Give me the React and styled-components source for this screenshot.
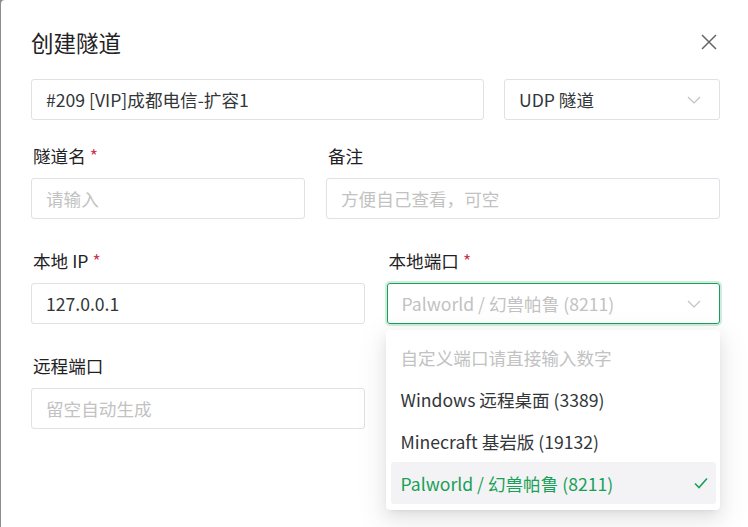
import styled, { createGlobalStyle } from "styled-components";

const GlobalStyle = createGlobalStyle`
    html, body {
        margin: 0;
        height: 100%;
    }
    body {
        background: #8c8c8c;
        font-family: "Noto Sans CJK SC", "Noto Sans", sans-serif;
        color: #333639;
    }
`;

const Modal = styled.div`
    margin-left: 1px;
    min-height: 527px;
    box-sizing: border-box;
    background: #fff;
    border-top-left-radius: 4px;
    padding: 20px 28px 0 30px;
`;

const Header = styled.div`
    display: flex;
    align-items: center;
    justify-content: space-between;
    height: 44px;
`;

const Title = styled.div`
    font-size: 22.5px;
    color: #1f2225;
`;

const CloseButton = styled.button`
    border: none;
    background: none;
    padding: 0;
    width: 20px;
    height: 20px;
    margin-right: 1px;
    display: flex;
    align-items: center;
    justify-content: center;
    color: #666;
    cursor: pointer;
`;

const Row = styled.div`
    display: grid;
    grid-template-columns: ${p => p.$cols};
    column-gap: ${p => p.$gap}px;
    margin-top: ${p => p.$top}px;
`;

const Item = styled.div`
    position: relative;
    display: flex;
    flex-direction: column;
    gap: 10px;
`;

const Label = styled.div`
    font-size: 17.6px;
    line-height: 24px;
    color: #1f2225;
    padding-left: 2px;
`;

const Star = styled.span`
    color: #d03050;
    margin-left: 4px;
`;

const Field = styled.div`
    height: 41px;
    box-sizing: border-box;
    border: 1px solid ${p => (p.$focus ? "#18a058" : "#e0e0e6")};
    box-shadow: ${p => (p.$focus ? "0 0 0 2px rgba(24,160,88,0.2)" : "none")};
    border-radius: 3px;
    display: flex;
    align-items: center;
    justify-content: space-between;
    padding: 0 18px 0 14px;
    font-size: 17.6px;
    color: ${p => (p.$placeholder ? "#c2c2c2" : "#333639")};
    white-space: nowrap;
`;

const Chevron = () => (
    <svg width="14" height="8" viewBox="0 0 14 8" fill="none">
        <path d="M1 1l6 6 6-6" stroke="#c2c2c2" strokeWidth="1.2" />
    </svg>
);

const Menu = styled.div`
    position: absolute;
    top: 81px;
    left: -1px;
    right: 0;
    background: #fff;
    border-radius: 4px;
    padding: 6px 4px 6px 5px;
    box-shadow: 0 3px 6px -4px rgba(0,0,0,0.12), 0 6px 16px 0 rgba(0,0,0,0.08), 0 9px 28px 8px rgba(0,0,0,0.05);
    z-index: 2;
`;

const Option = styled.div`
    height: 42px;
    display: flex;
    align-items: center;
    justify-content: space-between;
    padding: 0 8px 0 10px;
    border-radius: 3px;
    font-size: 17.6px;
    color: ${p => (p.$selected ? "#18a058" : p.$muted ? "#c2c2c2" : "#333639")};
    background: ${p => (p.$selected ? "#f3f3f5" : "transparent")};
`;

const Check = () => (
    <svg width="14" height="12" viewBox="0 0 14 12" fill="none">
        <path d="M1 6.5l4 4L13 1.5" stroke="#18a058" strokeWidth="1.6" />
    </svg>
);

export default function App() {
    return (
        <>
            <GlobalStyle />
            <Modal>
                <Header>
                    <Title>创建隧道</Title>
                    <CloseButton>
                        <svg width="16" height="16" viewBox="0 0 16 16">
                            <path d="M1 1l14 14M15 1L1 15" stroke="currentColor" strokeWidth="1.5" />
                        </svg>
                    </CloseButton>
                </Header>

                <Row $cols="1fr 216px" $gap={20} $top={15}>
                    <Field>#209 [VIP]成都电信-扩容1</Field>
                    <Field>UDP 隧道<Chevron /></Field>
                </Row>

                <Row $cols="274px 1fr" $gap={21} $top={24}>
                    <Item>
                        <Label>隧道名<Star>*</Star></Label>
                        <Field $placeholder>请输入</Field>
                    </Item>
                    <Item>
                        <Label>备注</Label>
                        <Field $placeholder>方便自己查看，可空</Field>
                    </Item>
                </Row>

                <Row $cols="1fr 1fr" $gap={22} $top={30}>
                    <Item>
                        <Label>本地 IP<Star>*</Star></Label>
                        <Field>127.0.0.1</Field>
                    </Item>
                    <Item>
                        <Label>本地端口<Star>*</Star></Label>
                        <Field $focus $placeholder>Palworld / 幻兽帕鲁 (8211)<Chevron /></Field>
                        <Menu>
                            <Option $muted>自定义端口请直接输入数字</Option>
                            <Option>Windows 远程桌面 (3389)</Option>
                            <Option>Minecraft 基岩版 (19132)</Option>
                            <Option $selected>Palworld / 幻兽帕鲁 (8211)<Check /></Option>
                        </Menu>
                    </Item>
                </Row>

                <Row $cols="1fr 1fr" $gap={22} $top={30}>
                    <Item>
                        <Label>远程端口</Label>
                        <Field $placeholder>留空自动生成</Field>
                    </Item>
                </Row>
            </Modal>
        </>
    );
}
